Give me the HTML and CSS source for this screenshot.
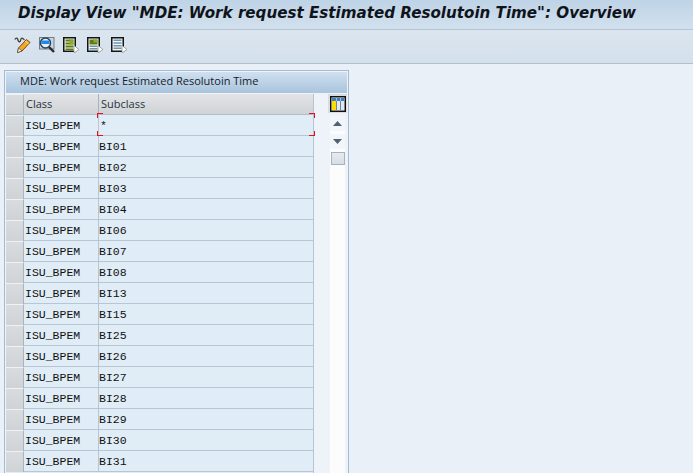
FILE: index.html
```html
<!DOCTYPE html>
<html lang="en">
<head>
<meta charset="utf-8">
<title>Display View</title>
<link rel="stylesheet" href="styles.css">
</head>
<body>
<header class="titlebar"><h1>Display View "MDE: Work request Estimated Resolutoin Time": Overview</h1></header>
<nav class="toolbar">
  <svg class="tool" width="17" height="16" viewBox="0 0 17 16"><path d="M.8 2.500C2 .5 3.500 1 3.800 2.500S5 5.500 6 4.500 6.500 1 8 1.200s1.500 1.300 2.500 1.800" fill="none" stroke="#3c3c3c" stroke-width="1.300"/><path d="M3.500 15.500l1-4.500 8-8.500 3.500 3-8 8.500z" fill="#f7a823" stroke="#6e4a12" stroke-width="1"/><path d="M3.500 15.500l1-4.500 3.500 3z" fill="#fff6e0" stroke="#4a4a4a" stroke-width=".7"/><path d="M11 4l3.500 3" stroke="#ffe08a" stroke-width="1"/></svg>
  <svg class="tool" width="16" height="16" viewBox="0 0 16 16"><rect x=".5" y=".5" width="14.500" height="11.500" fill="#c9d4e0" stroke="#6f7c8a"/><circle cx="6.500" cy="6" r="5" fill="#e6f0fa" stroke="#2a4258" stroke-width="1.500"/><path d="M2.500 3.500h8v3.500h-8z" fill="#1f86ec"/><path d="M10 10l5 5" stroke="#2b2b2b" stroke-width="2.400"/></svg>
  <svg class="tool" width="16" height="16" viewBox="0 0 16 16"><path d="M.75.75h11.500v13.500H.75z" fill="#f2f5f0" stroke="#141414" stroke-width="1.500"/><path d="M2.500 2.500h8v2h-8zM2.500 5.500h8v2h-8zM2.500 8.500h8v2h-8zM2.500 11.500h8v1.500h-8z" fill="#5d7d10"/><path d="M6.500 2.500h4v5h-4z" fill="#8bab2a"/><path d="M11 8.500l5 4-5 3.500z" fill="#fff" stroke="#8a8a8a" stroke-width=".7"/></svg>
  <svg class="tool" width="16" height="16" viewBox="0 0 16 16"><path d="M.75.75h11.500v13.500H.75z" fill="#f2f5f0" stroke="#141414" stroke-width="1.500"/><path d="M2.500 2.500h8v5h-8z" fill="#5d7d10"/><path d="M6.500 2.500h4v3h-4z" fill="#8bab2a"/><path d="M2.500 8.500h8v1.500h-8zM2.500 11h8v1.500h-8z" fill="#6f94ad"/><path d="M11 8.500l5 4-5 3.500z" fill="#fff" stroke="#8a8a8a" stroke-width=".7"/></svg>
  <svg class="tool" width="16" height="16" viewBox="0 0 16 16"><path d="M.75.75h11.500v13.500H.75z" fill="#f2f5f8" stroke="#141414" stroke-width="1.500"/><path d="M2.500 2.500h8V4h-8zM2.500 5.200h8v1.500h-8zM2.500 7.900h8v1.500h-8zM2.500 10.600h8v1.500h-8z" fill="#6f94ad"/><path d="M11 8.500l5 4-5 3.500z" fill="#fff" stroke="#8a8a8a" stroke-width=".7"/></svg>
</nav>
<main class="content">
  <section class="panel">
    <div class="panel-title">MDE: Work request Estimated Resolutoin Time</div>
    <div class="panel-body">
      <div class="table">
        <div class="row head"><span class="sel"></span><span class="c1">Class</span><span class="c2">Subclass</span></div>
        <div class="row"><span class="sel"></span><span class="c1">ISU_BPEM</span><span class="c2 star">*</span><i class="mark tl"></i><i class="mark tr"></i><i class="mark bl"></i><i class="mark br"></i></div>
        <div class="row"><span class="sel"></span><span class="c1">ISU_BPEM</span><span class="c2">BI01</span></div>
        <div class="row"><span class="sel"></span><span class="c1">ISU_BPEM</span><span class="c2">BI02</span></div>
        <div class="row"><span class="sel"></span><span class="c1">ISU_BPEM</span><span class="c2">BI03</span></div>
        <div class="row"><span class="sel"></span><span class="c1">ISU_BPEM</span><span class="c2">BI04</span></div>
        <div class="row"><span class="sel"></span><span class="c1">ISU_BPEM</span><span class="c2">BI06</span></div>
        <div class="row"><span class="sel"></span><span class="c1">ISU_BPEM</span><span class="c2">BI07</span></div>
        <div class="row"><span class="sel"></span><span class="c1">ISU_BPEM</span><span class="c2">BI08</span></div>
        <div class="row"><span class="sel"></span><span class="c1">ISU_BPEM</span><span class="c2">BI13</span></div>
        <div class="row"><span class="sel"></span><span class="c1">ISU_BPEM</span><span class="c2">BI15</span></div>
        <div class="row"><span class="sel"></span><span class="c1">ISU_BPEM</span><span class="c2">BI25</span></div>
        <div class="row"><span class="sel"></span><span class="c1">ISU_BPEM</span><span class="c2">BI26</span></div>
        <div class="row"><span class="sel"></span><span class="c1">ISU_BPEM</span><span class="c2">BI27</span></div>
        <div class="row"><span class="sel"></span><span class="c1">ISU_BPEM</span><span class="c2">BI28</span></div>
        <div class="row"><span class="sel"></span><span class="c1">ISU_BPEM</span><span class="c2">BI29</span></div>
        <div class="row"><span class="sel"></span><span class="c1">ISU_BPEM</span><span class="c2">BI30</span></div>
        <div class="row"><span class="sel"></span><span class="c1">ISU_BPEM</span><span class="c2">BI31</span></div>
      </div>
      <aside class="side">
        <div class="config"><svg width="16" height="16" viewBox="0 0 16 16"><path d="M.75.75h14.500v14.500H.75z" fill="#fff" stroke="#111" stroke-width="1.500"/><path d="M2 2h4v3H2zM6.500 2H10v3H6.500zM10.500 2H14v3h-3.500z" fill="#3f80c4"/><path d="M2 5h4v9H2z" fill="#ffdd00"/><path d="M7 5h3v9H7zM11 5h3v9h-3z" fill="#e4e8ec"/><path d="M6 5h1v9H6zM10 5h1v9h-1z" fill="#6d86a0"/></svg></div>
        <div class="track">
          <div class="btn"><svg width="9" height="5" viewBox="0 0 9 5"><path d="M4.500 0L9 5H0z" fill="#4f6173"/></svg></div>
          <div class="btn"><svg width="9" height="5" viewBox="0 0 9 5"><path d="M0 0h9L4.500 5z" fill="#4f6173"/></svg></div>
          <div class="thumb"></div>
        </div>
      </aside>
    </div>
  </section>
</main>
</body>
</html>
```
FILE: styles.css
```css
* { box-sizing: border-box; }
html, body { margin: 0; height: 100%; }
body {
  height: 473px;
  overflow: hidden;
  display: flex;
  flex-direction: column;
  background: #e9f0f8;
  font-family: "Open Sans", "DejaVu Sans", sans-serif;
  color: #1a1a1a;
}
.titlebar {
  height: 30px;
  flex: none;
  padding-left: 18px;
  background: linear-gradient(#bed3e6, #d3e1ee);
  border-bottom: 1px solid #b6c5d4;
}
.titlebar h1 {
  margin: 0;
  font: italic bold 15.13px/27px "DejaVu Sans", sans-serif;
  color: #10141a;
  white-space: nowrap;
}
.toolbar {
  height: 34px;
  flex: none;
  display: flex;
  align-items: center;
  gap: 8px;
  padding: 0 0 4px 14px;
  background: linear-gradient(#dbe5ef, #d4e0ec);
  border-bottom: 1px solid #b2bfcc;
}
.tool { display: block; }
.content { flex: 1; padding: 6px 0 0 4px; min-height: 0; overflow: hidden; }
.panel {
  width: 345px;
  height: 403px;
  overflow: hidden;
  border: 1px solid #a4bbd2;
  border-bottom: 0;
  padding: 1px 1px 0;
  background: #eef3f9;
}
.panel-title {
  height: 21px;
  padding-left: 14px;
  font-size: 11px;
  line-height: 18px;
  background: linear-gradient(#cfe0f0, #a9c4dc);
  color: #16202a;
}
.panel-body { display: flex; padding-top: 1px; }
.table { width: 308px; flex: none; border-right: 1px solid #b6c4d2; background: #e0ecf6; }
.row {
  position: relative;
  display: grid;
  grid-template-columns: 18px 75px 1fr;
  height: 21px;
  border-bottom: 1px solid #b8c6d4;
  background: #e0ecf6;
  font: 11.5px/21px "Liberation Mono", monospace;
  color: #111;
}
.row .sel {
  background: linear-gradient(#d8dcdf, #cfd3d6);
  border-right: 1px solid #aab4be;
  border-top: 1px solid #eef2f6;
}
.row .c1 { padding-left: 1px; border-right: 1px solid #b8c6d4; }
.row .star { padding-left: 1px; }
.row.head {
  border-bottom: 1px solid #b0bcc8;
  background: linear-gradient(#e2e4e6, #d0d3d6);
  font: 11px/19px "Open Sans", sans-serif;
  color: #26333f;
}
.row.head .c1 { padding-left: 2px; border-right: 1px solid #a8b2bc; }
.row.head .c2 { padding-left: 2px; }
.mark { position: absolute; width: 6px; height: 5px; border: 0 solid #e8101c; }
.mark.tl { left: 91px; top: -2px; border-width: 1px 0 0 1px; }
.mark.tr { right: -2px; top: -2px; border-width: 1px 1px 0 0; }
.mark.bl { left: 91px; bottom: -1px; border-width: 0 0 1px 1px; }
.mark.br { right: -2px; bottom: -1px; border-width: 0 1px 1px 0; }
.side {
  flex: 1;
  display: flex;
  flex-direction: column;
  align-items: flex-end;
  padding-right: 2px;
}
.config {
  width: 19px;
  height: 19px;
  margin-right: -2px;
  padding: 2px 2px 1px 2px;
  background: #d8dde2;
}
.config svg { display: block; }
.track {
  width: 15px;
  height: 360px;
  margin-top: 3px;
  display: flex;
  flex-direction: column;
  align-items: center;
  background: #fcfcfd;
}
.btn {
  width: 15px;
  height: 15px;
  margin-bottom: 3px;
  display: flex;
  align-items: center;
  justify-content: center;
  background: #f2f5f9;
}
.thumb {
  width: 14px;
  height: 13px;
  background: linear-gradient(#e6ebf1, #d5dde6);
  border: 1px solid #a9b2bc;
}
```
